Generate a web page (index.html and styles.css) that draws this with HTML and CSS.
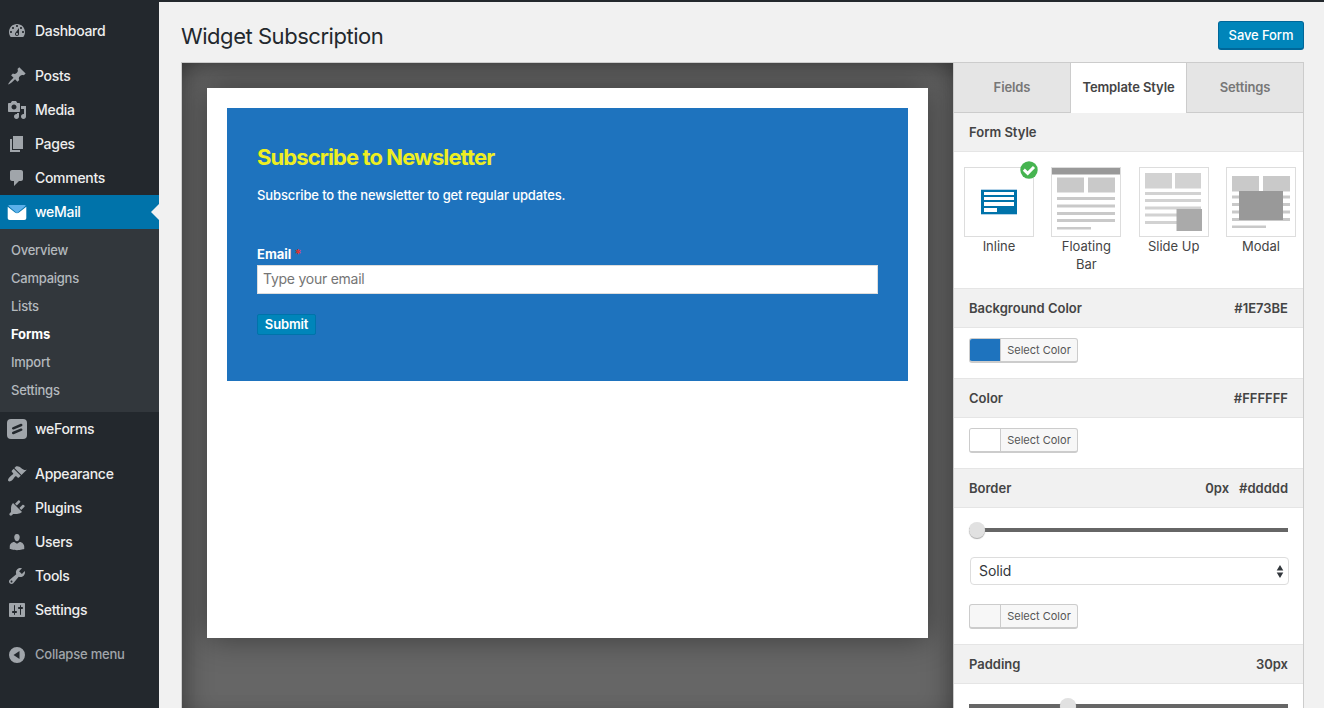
FILE: index.html
```html
<!DOCTYPE html>
<html lang="en">
<head>
<meta charset="utf-8">
<title>Widget Subscription</title>
<link rel="stylesheet" href="styles.css">
</head>
<body>
<div class="app">
  <nav class="sidebar">
    <a class="item gap-after"><svg class="icon" viewBox="0 0 20 20"><path d="M3.76 16h12.48c1.1-1.37 1.76-3.11 1.76-5 0-4.42-3.58-8-8-8s-8 3.58-8 8c0 1.89.66 3.63 1.76 5zM10 4c.55 0 1 .45 1 1s-.45 1-1 1-1-.45-1-1 .45-1 1-1zM6 6c.55 0 1 .45 1 1s-.45 1-1 1-1-.45-1-1 .45-1 1-1zm8 0c.55 0 1 .45 1 1s-.45 1-1 1-1-.45-1-1 .45-1 1-1zm-5.37 5.55L12 7v6c0 1.1-.9 2-2 2s-2-.9-2-2c0-.57.24-1.08.63-1.45zM4 10c.55 0 1 .45 1 1s-.45 1-1 1-1-.45-1-1 .45-1 1-1zm12 0c.55 0 1 .45 1 1s-.45 1-1 1-1-.45-1-1 .45-1 1-1zm-5 3c0-.55-.45-1-1-1s-1 .45-1 1 .45 1 1 1 1-.45 1-1z"/></svg><span>Dashboard</span></a>
    <a class="item"><svg class="icon" viewBox="0 0 20 20"><path d="M10.44 3.02l1.82-1.82 6.36 6.35-1.83 1.82c-1.05-.68-2.48-.57-3.41.36l-.75.75c-.92.93-1.04 2.35-.35 3.41l-1.83 1.82-2.41-2.41-2.8 2.79c-.42.42-3.38 2.71-3.8 2.29s1.86-3.39 2.28-3.81l2.79-2.79L4.1 9.36l1.83-1.82c1.05.69 2.48.57 3.4-.36l.75-.75c.93-.92 1.05-2.35.36-3.41z"/></svg><span>Posts</span></a>
    <a class="item"><svg class="icon" viewBox="0 0 20 20"><path d="M13 11V4c0-.55-.45-1-1-1h-1.67L9 1H5L3.67 3H2c-.55 0-1 .45-1 1v7c0 .55.45 1 1 1h10c.55 0 1-.45 1-1zM7 4.5c1.38 0 2.5 1.12 2.5 2.5S8.38 9.5 7 9.5 4.5 8.38 4.5 7 5.62 4.5 7 4.5zM14 6h5v10.5c0 1.38-1.12 2.5-2.5 2.5S14 17.88 14 16.5s1.12-2.5 2.5-2.5c.17 0 .34.02.5.05V9h-3V6zm-4 8.05V13h2v3.5c0 1.38-1.12 2.5-2.5 2.5S7 17.88 7 16.5 8.12 14 9.5 14c.17 0 .34.02.5.05z"/></svg><span>Media</span></a>
    <a class="item"><svg class="icon" viewBox="0 0 20 20"><path d="M6 15V2h10v13H6zm-1 1h8v2H3V5h2v11z"/></svg><span>Pages</span></a>
    <a class="item"><svg class="icon" viewBox="0 0 20 20"><path d="M5 2h9c1.100 0 2 .9 2 2v7c0 1.100-.9 2-2 2h-2l-5 5v-5H5c-1.100 0-2-.9-2-2V4c0-1.100.9-2 2-2z"/></svg><span>Comments</span></a>
    <a class="item current"><svg class="icon" viewBox="0 0 20 20"><path fill="#5cb0ea" d="M2.500 3h15c.6 0 1 .3 1.300.7L10 11.300 1.200 3.700C1.500 3.300 2 3 2.500 3z"/><path fill="#fff" d="M.7 4.700L8 10.400c1.300 1 2.700 1 4 0l7.300-5.700V16c0 1.200-.8 2-2 2H2.700c-1.200 0-2-.8-2-2z"/></svg><span>weMail</span></a>
    <div class="submenu">
      <a>Overview</a>
      <a>Campaigns</a>
      <a>Lists</a>
      <a class="active">Forms</a>
      <a>Import</a>
      <a>Settings</a>
    </div>
    <a class="item gap-after"><svg class="icon" viewBox="0 0 20 20"><path d="M4 0h12a4 4 0 0 1 4 4v12a4 4 0 0 1-4 4H4a4 4 0 0 1-4-4V4a4 4 0 0 1 4-4z"/><path d="M6.200 9.300l8-3.300M6.200 14l8-3.300" fill="none" stroke="#23282d" stroke-width="2.500" stroke-linecap="round"/></svg><span>weForms</span></a>
    <a class="item"><svg class="icon" viewBox="0 0 20 20"><path d="M14.480 11.060L7.410 3.990l1.500-1.500c.5-.56 2.300-.47 3.510.32 1.210.8 1.430 1.280 2.910 2.100 1.180.64 2.450 1.260 4.450.85zm-.71.71L6.700 4.700 4.930 6.470c-.39.39-.39 1.020 0 1.410l1.060 1.060c.39.39.39 1.030 0 1.420-.6.6-1.430 1.110-2.210 1.690-.35.26-.7.53-1.010.84C1.430 14.230.4 16.080 1.400 17.070c.99 1 2.840-.03 4.180-1.360.31-.31.58-.66.85-1.020.57-.78 1.080-1.610 1.690-2.210.39-.39 1.020-.39 1.410 0l1.060 1.060c.39.39 1.020.39 1.410 0z"/></svg><span>Appearance</span></a>
    <a class="item"><svg class="icon" viewBox="0 0 20 20"><path d="M13.110 4.360L9.870 7.600 8 5.730l3.240-3.240c.35-.34 1.050-.2 1.560.32.52.51.66 1.210.31 1.550zm-8 1.770l.91-1.120 9.010 9.010-1.190.84c-.71.71-2.630 1.160-3.820 1.160H6.140L4.900 17.260c-.59.59-1.540.59-2.120 0-.59-.58-.59-1.530 0-2.120l1.240-1.240v-3.880c0-1.130.4-3.190 1.090-3.890zm7.260 3.970l3.240-3.240c.34-.35 1.040-.21 1.550.31.52.51.66 1.210.31 1.550l-3.240 3.250z"/></svg><span>Plugins</span></a>
    <a class="item"><svg class="icon" viewBox="0 0 20 20"><path d="M10 9.250c-2.270 0-2.730-3.440-2.730-3.440C7 4.020 7.820 2 9.970 2c2.160 0 2.980 2.020 2.710 3.810 0 0-.41 3.440-2.680 3.440zm0 2.570L12.720 10c2.390 0 4.520 2.330 4.520 4.530v2.490s-3.650 1.130-7.240 1.130c-3.650 0-7.240-1.130-7.240-1.130v-2.490c0-2.250 1.940-4.480 4.470-4.480z"/></svg><span>Users</span></a>
    <a class="item"><svg class="icon" viewBox="0 0 20 20"><path d="M16.680 9.770c-1.340 1.340-3.300 1.670-4.950.99l-5.410 6.520c-.99.99-2.590.99-3.580 0s-.99-2.590 0-3.570l6.520-5.420c-.68-1.650-.35-3.610.99-4.950 1.280-1.280 3.120-1.620 4.720-1.060l-2.890 2.890 2.820 2.820 2.860-2.870c.53 1.580.18 3.390-1.080 4.650zM3.810 16.210c.4.39 1.040.39 1.430 0 .4-.4.4-1.040 0-1.430-.39-.4-1.030-.4-1.430 0-.39.39-.39 1.030 0 1.430z"/></svg><span>Tools</span></a>
    <a class="item gap-after"><svg class="icon" viewBox="0 0 20 20"><path d="M18 16V4c0-.55-.45-1-1-1H3c-.55 0-1 .45-1 1v12c0 .55.45 1 1 1h14c.55 0 1-.45 1-1zM8 11h1c.55 0 1 .45 1 1s-.45 1-1 1H8v1.500c0 .28-.22.5-.5.5s-.5-.22-.5-.5V13H6c-.55 0-1-.45-1-1s.45-1 1-1h1V5.500c0-.28.22-.5.5-.5s.5.22.5.5V11zm5-2h-1c-.55 0-1-.45-1-1s.45-1 1-1h1V5.500c0-.28.22-.5.5-.5s.5.22.5.5V7h1c.55 0 1 .45 1 1s-.45 1-1 1h-1v5.500c0 .28-.22.5-.5.5s-.5-.22-.5-.5V9z"/></svg><span>Settings</span></a>
    <a class="item collapse"><svg class="icon" viewBox="0 0 20 20"><path fill-rule="evenodd" d="M10 2a8 8 0 1 1 0 16 8 8 0 0 1 0-16zM12.500 6L6.500 10l6 4z"/></svg><span>Collapse menu</span></a>
  </nav>

  <main class="main">
    <header class="topbar">
      <h1>Widget Subscription</h1>
      <button class="save">Save Form</button>
    </header>

    <div class="builder">
      <section class="canvas">
        <div class="page">
          <form class="form">
            <h2>Subscribe to Newsletter</h2>
            <p>Subscribe to the newsletter to get regular updates.</p>
            <label>Email <span class="required">*</span></label>
            <input type="text" placeholder="Type your email">
            <button type="button" class="submit">Submit</button>
          </form>
        </div>
      </section>

      <aside class="panel">
        <div class="tabs">
          <div class="tab">Fields</div>
          <div class="tab selected">Template Style</div>
          <div class="tab">Settings</div>
        </div>

        <div class="head first"><span>Form Style</span></div>
        <div class="styles">
          <div class="style">
            <div class="thumb">
              <svg width="68" height="68" viewBox="0 0 68 68"><path fill="#b5d3e8" d="M16 21h36v26H16z"/><path fill="#0073aa" d="M16 22h36v24H16z"/><path fill="#fff" d="M19 24h30v3H19zM19 29h30v3H19zM19 34h30v4H19zM19 40h13v4H19z"/></svg>
              <svg class="badge" width="18" height="18" viewBox="0 0 18 18"><circle cx="9" cy="9" r="8.700" fill="#46b450"/><path d="M3.800 8.700l3.900 3.600 6.300-6.300" fill="none" stroke="#fff" stroke-width="3"/></svg>
            </div>
            <div class="caption">Inline</div>
          </div>
          <div class="style">
            <div class="thumb">
              <svg width="68" height="68" viewBox="0 0 68 68"><path fill="#999" d="M0 0h68v6.500H0z"/><path fill="#c9c9c9" d="M5 9.500h27v15H5zM36 9.500h27v15H36zM5 29h58v3H5zM5 36.500h58v3H5zM5 44h58v3H5zM5 51h58v3H5zM5 59h34v2.500H5z"/></svg>
            </div>
            <div class="caption">Floating Bar</div>
          </div>
          <div class="style">
            <div class="thumb">
              <svg width="68" height="68" viewBox="0 0 68 68"><path fill="#d2d2d2" d="M5 5h27v15.500H5zM35 5h26v15.500H35zM5 24h56v3H5zM5 31h56v3H5zM5 38.500h56v3H5zM5 45.500h32v3H5zM5 53h32v3H5z"/><path fill="#aaa" d="M36.500 41H62v22H36.500z"/></svg>
            </div>
            <div class="caption">Slide Up</div>
          </div>
          <div class="style">
            <div class="thumb">
              <svg width="68" height="68" viewBox="0 0 68 68"><path fill="#c9c9c9" d="M5 8h27v15.500H5zM36 8h27v15.500H36zM5 27.500h58v3H5zM5 35h58v3H5zM5 42.500h58v3H5zM5 50h58v3H5zM5 57.500h34v2.500H5z"/><path fill="#999" d="M12 23h44v29H12z"/></svg>
            </div>
            <div class="caption">Modal</div>
          </div>
        </div>

        <div class="head"><span>Background Color</span><span>#1E73BE</span></div>
        <div class="body">
          <div class="picker"><span class="swatch blue"></span><span class="pick">Select Color</span></div>
        </div>

        <div class="head"><span>Color</span><span>#FFFFFF</span></div>
        <div class="body">
          <div class="picker"><span class="swatch white"></span><span class="pick">Select Color</span></div>
        </div>

        <div class="head"><span>Border</span><span class="values"><span>0px</span><span>#ddddd</span></span></div>
        <div class="body tall">
          <div class="slider"><span class="knob"></span></div>
          <div class="select"><span>Solid</span><svg width="8" height="13" viewBox="0 0 8 13"><path fill="#32373c" d="M4 0l3.300 5.500H.7zM4 13L.7 7.500h6.600z"/></svg></div>
          <div class="picker"><span class="swatch"></span><span class="pick">Select Color</span></div>
        </div>

        <div class="head"><span>Padding</span><span>30px</span></div>
        <div class="body last">
          <div class="slider third"><span class="knob"></span></div>
        </div>
      </aside>
    </div>
  </main>
</div>
</body>
</html>
```
FILE: styles.css
```css
* { box-sizing: border-box; }

body {
  margin: 0;
  height: 708px;
  overflow: hidden;
  background: #f1f1f1;
  color: #444;
  font-family: Inter, "Liberation Sans", sans-serif;
  font-size: 13px;
}

button, input { font-family: inherit; }

.app { display: flex; height: 708px; }

/* Sidebar */
.sidebar {
  width: 159px;
  flex: none;
  padding-top: 14px;
  background: #23282d;
}

.item {
  position: relative;
  display: flex;
  align-items: center;
  gap: 8px;
  height: 34px;
  padding-left: 7px;
  color: #eee;
  font-size: 14px;
  font-weight: 500;
  letter-spacing: -0.3px;
}

.item span { padding-bottom: 2px; }

.icon { width: 20px; height: 20px; flex: none; fill: #a0a5aa; }

.gap-after { margin-bottom: 11px; }

.current { background: #0073aa; color: #fff; }

.current::after {
  content: "";
  position: absolute;
  right: 0;
  top: 9px;
  border: 8px solid transparent;
  border-left: 0;
  border-right-color: #f1f1f1;
}

.collapse { color: #a0a5aa; font-size: 13px; letter-spacing: -0.2px; }

.submenu { height: 183px; padding: 7px 0 8px 11px; background: #32373c; }

.submenu a {
  display: block;
  height: 28px;
  line-height: 29px;
  color: #b4b9be;
  font-weight: 500;
  letter-spacing: -0.25px;
}

.submenu .active { color: #fff; font-weight: 700; letter-spacing: -0.15px; }

/* Page header */
.main {
  flex: 1;
  border-top: 2px solid #23282d;
  padding: 0 20px 0 22px;
}

.topbar {
  display: flex;
  align-items: center;
  justify-content: space-between;
  height: 60px;
  padding-top: 7px;
}

h1 {
  margin: 0;
  color: #23282d;
  font-size: 22px;
  font-weight: 400;
  letter-spacing: -0.46px;
}

.save {
  width: 86px;
  height: 29px;
  padding: 0;
  border: 1px solid #006799;
  border-bottom-width: 2px;
  border-radius: 3px;
  background: #0085ba;
  color: #fff;
  font-size: 13px;
  font-weight: 500;
  letter-spacing: -0.1px;
}

/* Builder */
.builder {
  display: flex;
  width: 1123px;
  height: 646px;
  border: 1px solid #ccc;
  border-bottom: 0;
  overflow: hidden;
}

.canvas {
  width: 771px;
  flex: none;
  padding: 25px;
  background: #666;
  box-shadow: inset 0 20px 30px -20px rgba(0, 0, 0, .42), inset 20px 0 30px -20px rgba(0, 0, 0, .42), inset -20px 0 30px -20px rgba(0, 0, 0, .42);
}

.page {
  height: 550px;
  padding: 20px;
  background: #fff;
  box-shadow: 0 0 30px rgba(0, 0, 0, .42);
}

.form { height: 273px; padding: 36px 30px; background: #1e73be; color: #fff; }

.form h2 {
  margin: 0 0 16px;
  color: #eeee22;
  font-size: 22px;
  line-height: 26px;
  font-weight: 700;
  letter-spacing: -0.9px;
}

.form p { margin: 0 0 42px; line-height: 18px; font-weight: 500; letter-spacing: -0.12px; }

.form label { display: block; height: 19px; line-height: 17px; font-weight: 700; }

.required { color: #dc3232; }

.form input {
  display: block;
  width: 100%;
  height: 29px;
  margin: 0 0 20px;
  padding: 0 5px 2px;
  border: 1px solid #ddd;
  color: #32373c;
  font-size: 14px;
  letter-spacing: -0.25px;
}

.form input::placeholder { color: #757575; }

.submit {
  display: block;
  width: 59px;
  height: 21px;
  padding: 0 0 1px;
  border: 1px solid #0073aa;
  border-radius: 2px;
  background: #0085ba;
  color: #fff;
  font-size: 13px;
  line-height: 17px;
  font-weight: 600;
  letter-spacing: -0.15px;
}

/* Options panel */
.panel { flex: 1; border-left: 1px solid #ccc; background: #fff; }

.tabs { display: grid; grid-template-columns: 117px 115px 117px; height: 49px; }

.tab {
  border-right: 1px solid #ccc;
  border-bottom: 1px solid #ccc;
  background: #e5e5e5;
  color: #777;
  font-weight: 600;
  letter-spacing: -0.1px;
  line-height: 49px;
  text-align: center;
}

.tab.selected { border: 0; background: #fff; color: #444; }

.tab:last-child { border-right: 0; border-left: 1px solid #ccc; }

.head {
  display: flex;
  align-items: center;
  justify-content: space-between;
  height: 40px;
  padding: 0 15px;
  border-top: 1px solid #e5e5e5;
  border-bottom: 1px solid #e5e5e5;
  background: #f1f1f1;
  font-weight: 600;
}

.head.first { border-top-color: #fff; }

.values { display: flex; gap: 10px; }

.styles {
  display: flex;
  justify-content: space-between;
  height: 136px;
  padding: 15px 7px 0 10px;
}

.style { width: 70px; }

.thumb { position: relative; height: 70px; border: 1px solid #ddd; }

.thumb svg { display: block; }

.thumb .badge { position: absolute; top: -7px; right: -5px; }

.caption { line-height: 18px; text-align: center; }

.body { height: 50px; padding: 10px 15px; }

.body.tall { height: 136px; }

.body.last { height: 25px; overflow: hidden; padding-bottom: 0; }

.picker {
  display: flex;
  width: 109px;
  height: 25px;
  border: 1px solid #ccc;
  border-bottom-width: 2px;
  border-radius: 3px;
  background: #f7f7f7;
  overflow: hidden;
}

.swatch { width: 31px; border-right: 1px solid #ccc; }
.swatch.blue { background: #1e73be; }
.swatch.white { background: #fff; }

.pick { flex: 1; color: #555; font-size: 11px; line-height: 22px; text-align: center; }

.slider { position: relative; height: 4px; margin-top: 10px; background: #666; }

.knob {
  position: absolute;
  left: 0;
  top: -6px;
  width: 16px;
  height: 16px;
  border-radius: 50%;
  background: #e1e1e1;
  box-shadow: 0 1px 1px #aaa;
}

.third .knob { left: 91px; }

.select {
  display: flex;
  align-items: center;
  justify-content: space-between;
  height: 28px;
  margin: 25px -1px 19px 1px;
  padding: 0 4px 0 8px;
  border: 1px solid #ddd;
  border-radius: 4px;
  color: #32373c;
  font-size: 14px;
}

.select span { padding-bottom: 2px; letter-spacing: -0.1px; }
```
